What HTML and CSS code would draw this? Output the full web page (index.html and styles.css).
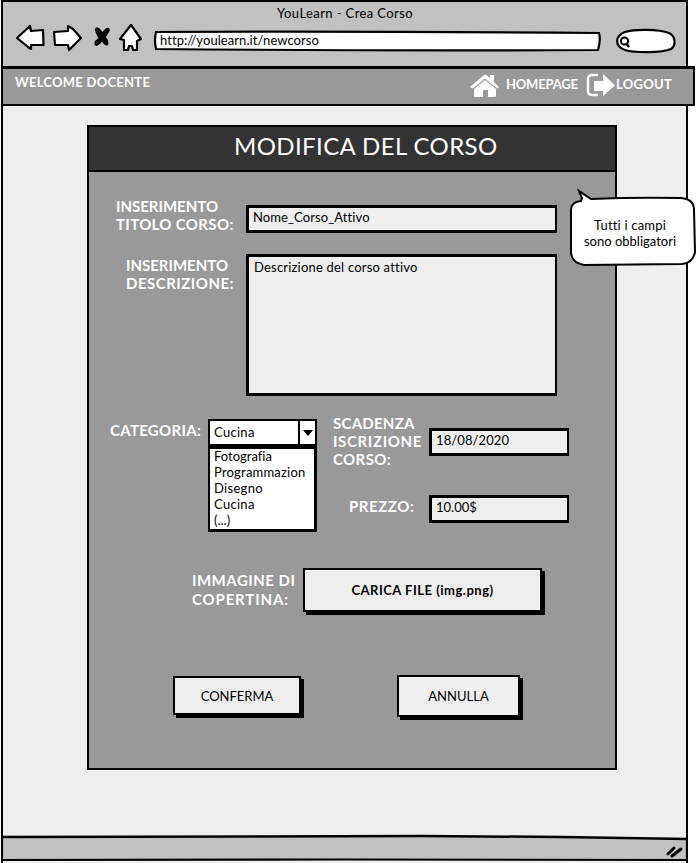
FILE: index.html
```html
<!DOCTYPE html>
<html lang="it">
<head>
<meta charset="utf-8">
<title>YouLearn - Crea Corso</title>
<link rel="stylesheet" href="styles.css">
</head>
<body>
<div class="window">
  <header class="chrome">
    <div class="window-title"><span>YouLearn - Crea Corso</span></div>
    <div class="toolbar">
      <svg class="controls" width="130" height="34" viewBox="0 0 130 34">
        <g fill="#fff" stroke="#000" stroke-width="2.2" stroke-linejoin="round">
          <path d="M2 16L15 4L16 9L28 8L28.500 23L16 23L16 27L13 25Z"/>
          <path d="M39 10L53 9L53 4L58 7L66 16L54 28L53 23L40 23Z"/>
          <path d="M116 3L126 17L122 19L122 28L118 28L117 24L114 24L113 28L109 28L109 18L105 17Z"/>
        </g>
        <g fill="#000">
          <path d="M80 8Q80 4 84 6Q88 10 90 14Q95 20 93 23Q91 25 87 20Q81 14 80 8Z"/><path d="M90 7Q94 4 95 8Q93 13 89 17Q86 22 82 24Q78 24 80 19Q84 16 86 12Z"/>
        </g>
      </svg>
      <div class="address">
        <svg width="448" height="22" viewBox="0 0 448 22"><path d="M3 2Q200 1 446 3Q448 10 445 20Q220 21 3 19Q1 10 3 2Z" fill="#fff" stroke="#000" stroke-width="2.200"/></svg>
        <span class="url">http://youlearn.it/newcorso</span>
      </div>
      <svg class="search" width="62" height="26" viewBox="0 0 62 26">
        <path d="M10 4C19 1 44 1 54 5C61 8 61 18 56 21C47 25 20 25 10 22C-1 18 0 8 10 4Z" fill="#fff" stroke="#000" stroke-width="2.200"/>
        <circle cx="9.500" cy="13" r="3.600" fill="none" stroke="#000" stroke-width="2"/><path d="M11 15L14 19" stroke="#000" stroke-width="2.400"/>
      </svg>
    </div>
  </header>
  <nav class="nav">
    <span class="welcome">WELCOME DOCENTE</span>
    <svg class="home" width="30" height="25" viewBox="0 0 30 25"><path d="M0 14L14 2Q15 1 16 2L20 5V2H24V9L29 14L27 15.500L15 5.500L3 15.500Z" fill="#fff"/><path d="M4 16L15 7L26 16V23Q26 24 25 24H18V17H13V24H5Q4 24 4 23Z" fill="#fff"/></svg>
    <span class="homepage">HOMEPAGE</span>
    <svg class="exit" width="29" height="25" viewBox="0 0 29 25"><path d="M12 2H6Q2 2 2 6V18Q2 22 6 22H12" fill="none" stroke="#fff" stroke-width="2.400"/><path d="M8 8H17V1L29 12.500L17 23V18H8Z" fill="#fff"/></svg>
    <span class="logout">LOGOUT</span>
  </nav>
  <main class="content">
    <section class="panel">
      <h1><span>MODIFICA DEL CORSO</span></h1>
      <div class="row row-title">
        <label><span class="t-ins">INSERIMENTO</span><br><span class="t-tit">TITOLO CORSO:</span></label>
        <div class="field wide"><span class="t-name">Nome_Corso_Attivo</span></div>
      </div>
      <div class="row row-desc">
        <label><span class="t-ins">INSERIMENTO</span><br><span class="t-des">DESCRIZIONE:</span></label>
        <div class="field area"><span class="t-area">Descrizione del corso attivo</span></div>
      </div>
      <div class="row row-options">
        <label class="category"><span class="t-cat">CATEGORIA:</span></label>
        <div class="combo">
          <div class="selected"><span class="t-cuc">Cucina</span><i><svg width="10" height="6" viewBox="0 0 10 6"><path d="M0 0H10L5 6Z"/></svg></i></div>
          <ul><li class="t-fot">Fotografia</li><li class="t-pro">Programmazion</li><li class="t-dis">Disegno</li><li class="t-cuc">Cucina</li><li class="t-dot">(...)</li></ul>
        </div>
        <div class="details">
          <label class="deadline"><span class="t-sca">SCADENZA</span><br><span class="t-isc">ISCRIZIONE</span><br><span class="t-cor">CORSO:</span></label>
          <div class="field date"><span class="t-date">18/08/2020</span></div>
          <label class="price"><span class="t-pre">PREZZO:</span></label>
          <div class="field amount"><span class="t-amt">10.00$</span></div>
        </div>
      </div>
      <div class="row row-cover">
        <label><span class="t-imm">IMMAGINE DI</span><br><span class="t-cop">COPERTINA:</span></label>
        <div class="button upload"><span>CARICA FILE (img.png)</span></div>
      </div>
      <div class="row row-actions">
        <div class="button confirm"><span>CONFERMA</span></div>
        <div class="button cancel"><span>ANNULLA</span></div>
      </div>
    </section>
  </main>
  <footer class="status">
    <svg width="687" height="28" viewBox="0 0 687 28"><path d="M1 3L420 2L686 5V26H1Z" fill="#c1c1c1"/><path d="M1 3L420 2L560 3L686 5" fill="none" stroke="#000" stroke-width="2.500"/><path d="M1 2V26L340 25.500L686 26V4" fill="none" stroke="#000" stroke-width="2.200"/><path d="M667 20L673 14M671 22L680 15" stroke="#000" stroke-width="3" stroke-linecap="round"/></svg>
  </footer>
</div>
<aside class="tip">
  <svg width="128" height="80" viewBox="0 0 128 80"><path d="M12 13L13 10L10 3L22 11Q65 9 112 10Q125 11 125 22L126 64Q124 75 113 76L15 77Q3 75 2 65L2 22Q2 14 12 13Z" fill="#fff" stroke="#000" stroke-width="2"/></svg>
  <p><span class="t-tip1">Tutti i campi</span><br><span class="t-tip2">sono obbligatori</span></p>
</aside>
</body>
</html>
```
FILE: styles.css
```css
* { box-sizing: border-box; }
body { margin: 0; background: #fff; font: 13px/16px Lato, "Liberation Sans", sans-serif; font-variant-ligatures: none; color: #000; width: 696px; height: 863px; overflow: hidden; white-space: nowrap; }
svg { display: block; flex: none; }
.window { width: 687px; height: 863px; margin-left: 1px; padding-bottom: 1px; border: 2px solid #000; border-width: 2px 2px 0; background: #eee; display: flex; flex-direction: column; }
.chrome { height: 64px; background: #c1c1c1; }
.window-title { height: 20px; padding: 3px 0 0 274px; }
.window-title span { letter-spacing: .4px; }
.toolbar { display: flex; padding-left: 12px; }
.address { display: grid; margin: 8px 0 0 8px; }
.address svg, .address .url { grid-area: 1 / 1; }
.address .url { padding: 2px 0 0 7px; letter-spacing: .07px; }
.search { margin: 6px 0 0 14px; }
.nav { width: 694px; height: 40px; margin-left: -2px; border: 2px solid #000; border-width: 3px 2px 2px; background: #999; color: #fff; font-weight: 700; display: flex; flex: none; }
.nav span { margin-top: 7px; }
.nav .welcome { width: 316px; margin: 5px 0 0 12px; letter-spacing: .27px; }
.home, .exit { margin-top: 4px; }
.home { margin-left: 139px; }
.homepage { width: 74px; margin-left: 6px; letter-spacing: -.2px; }
.exit { margin-left: 6px; }
.logout { letter-spacing: .3px; margin-left: 1px; }
.content { flex: 1; padding: 19px 0 0 84px; }
.panel { width: 530px; height: 645px; background: #999; border: 2px solid #000; }
h1 { margin: 0; height: 45px; background: #333; border-bottom: 2px solid #000; color: #fff; font-size: 24px; line-height: 37px; font-weight: 400; padding-left: 145px; letter-spacing: .4px; }
.row { display: flex; }
label { color: #fff; font-size: 15px; font-weight: 700; line-height: 18px; }
.field { border: 3px solid #000; border-width: 3px 2px 3px 3px; background: #eee; padding: 1px 0 0 4px; }
.row-title { padding: 25px 0 0 27px; }
.row-title label { width: 130px; }
.wide { width: 311px; height: 28px; margin-top: 8px; }
.row-desc { padding: 21px 0 0 37px; }
.row-desc label { width: 120px; padding-top: 2px; }
.area { width: 311px; height: 142px; padding: 2px 0 0 5px; }
.row-options { padding-top: 18px; }
.category { width: 98px; margin: 7px 0 0 21px; }
.combo { width: 109px; height: 114px; margin-top: 5px; }
.selected { height: 27px; border: 2px solid #000; background: #fff; display: flex; justify-content: space-between; padding: 3px 0 0 4px; }
.selected i { width: 17px; margin-top: -3px; border-left: 2px solid #000; padding: 9px 0 0 3px; }
.combo ul { list-style: none; margin: 0; height: 86px; border: 3px solid #000; border-width: 3px 3px 3px 2px; padding: 0 0 0 4px; background: #fff; line-height: 16px; }
.combo li { margin: -1px 0 1px; }
.details { display: grid; grid-template-columns: 96px 140px; grid-template-rows: 81px 27px; margin-left: 16px; }
.date { height: 28px; margin-top: 14px; }
.amount { height: 28px; }
.price { padding: 2px 0 0 16px; }
.row-cover { padding: 35px 0 0 103px; }
.row-cover label { width: 111px; padding-top: 3px; line-height: 19px; }
.button { background: #eee; border: 2px solid #000; box-shadow: 3px 3px 0 #000; text-align: center; }
.upload { width: 239px; height: 44px; line-height: 41px; font-weight: 700; letter-spacing: .5px; }
.row-actions { padding: 61px 0 0 84px; }
.confirm { width: 128px; height: 39px; margin-top: 3px; line-height: 37px; }
.cancel { width: 123px; height: 42px; margin: 2px 0 0 96px; line-height: 38px; }
.status { height: 28px; margin-left: -2px; }
.tip { position: absolute; left: 569px; top: 188px; display: grid; }
.tip svg, .tip p { grid-area: 1 / 1; }
.tip p { margin: 29px 0 0; text-align: center; padding-right: 6px; }
.t-tit { letter-spacing: .35px; }
.t-des { letter-spacing: .5px; }
.t-cat { letter-spacing: .3px; }
.t-sca { letter-spacing: .25px; }
.t-isc { letter-spacing: .65px; }
.t-cor { letter-spacing: .4px; }
.t-pre { letter-spacing: .55px; }
.t-imm { letter-spacing: .5px; }
.t-cop { letter-spacing: .85px; }
.t-area, .t-pro, .t-tip1 { letter-spacing: .2px; }
.t-name, .t-date { letter-spacing: .1px; }
.t-cuc, .t-dis { letter-spacing: .3px; }
```
